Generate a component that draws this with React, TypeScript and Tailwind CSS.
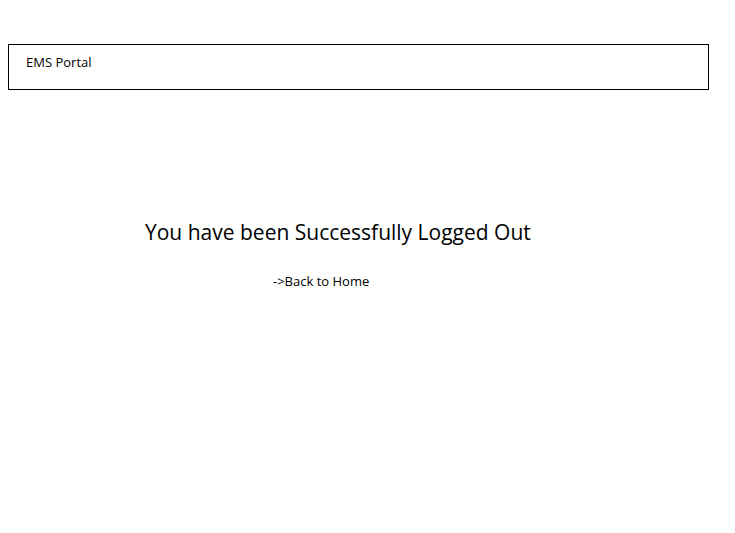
export default function App() {
  return (
    <div className="min-h-screen bg-white text-black" style={{ fontFamily: '"Open Sans", "Noto Sans", sans-serif' }}>
      <div className="pt-[44px] pl-[8px]">
        <header className="w-[701px] h-[46px] border border-black pl-[17px] pt-[4px]">
          <span className="text-[13px]">EMS Portal</span>
        </header>
      </div>

      <main className="pl-[145px] pt-[128px]">
        <h1 className="text-[21px] leading-[28px]">You have been Successfully Logged Out</h1>
        <a href="#" className="mt-[26px] ml-[128px] block w-fit text-[13px] text-black">
          -&gt;Back to Home
        </a>
      </main>
    </div>
  );
}
